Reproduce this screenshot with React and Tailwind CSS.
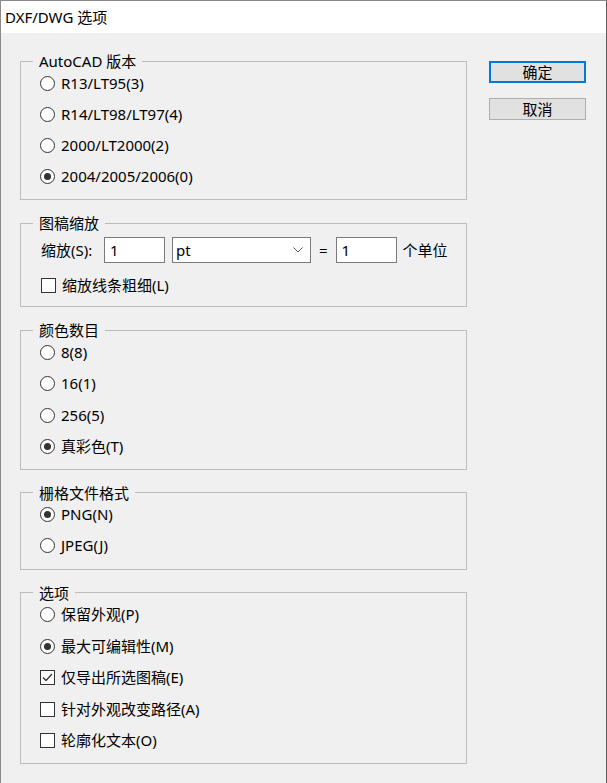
import React from "react";

function Radio({ label, checked }) {
  return (
    <div className="flex items-center h-6 gap-[6px]">
      <span className="w-[15px] h-[15px] rounded-full border border-[#333333] bg-white flex items-center justify-center">
        {checked && <span className="w-[7px] h-[7px] rounded-full bg-[#333333]" />}
      </span>
      <span>{label}</span>
    </div>
  );
}

function Check({ label, checked }) {
  return (
    <div className="flex items-center h-6 gap-[6px]">
      <span className="w-[15px] h-[15px] border border-[#333333] bg-white flex items-center justify-center">
        {checked && (
          <svg width="11" height="9" viewBox="0 0 11 9">
            <path d="M1 4.5 L4 7.5 L10 1" fill="none" stroke="#333333" strokeWidth="1.3" />
          </svg>
        )}
      </span>
      <span>{label}</span>
    </div>
  );
}

function Group({ title, children }) {
  return (
    <fieldset className="border border-[#bcbcbc] px-0 m-0">
      <legend className="ml-[12px] px-[6px] leading-[20px]">{title}</legend>
      {children}
    </fieldset>
  );
}

export default function App() {
  return (
    <div className="w-[607px] h-[783px] bg-[#f0f0f0] border-t border-l border-r border-t-[#8a8a8a] border-l-[#8a8a8a] border-r-[#5a5e63] flex flex-col text-[15px] text-black font-['Noto_Sans','Noto_Sans_CJK_SC',sans-serif] overflow-hidden">
      <div className="h-[32px] shrink-0 bg-white flex items-center pl-[4px]">DXF/DWG 选项</div>
      <div className="flex pt-[18px] pl-[19px]">
        <div className="w-[447px] flex flex-col gap-[13px]">
          <Group title="AutoCAD 版本">
            <div className="flex flex-col gap-[7px] pl-[19px] pt-0 pb-[11px]">
              <Radio label="R13/LT95(3)" />
              <Radio label="R14/LT98/LT97(4)" />
              <Radio label="2000/LT2000(2)" />
              <Radio label="2004/2005/2006(0)" checked />
            </div>
          </Group>
          <Group title="图稿缩放">
            <div className="flex flex-col pl-[20px] pt-[4px] pb-[9px] gap-[10px]">
              <div className="flex items-center h-[26px]">
                <span className="w-[63px]">缩放(S):</span>
                <div className="w-[61px] h-[26px] border border-[#7a7a7a] bg-white pl-[5px] flex items-center">1</div>
                <div className="ml-[7px] w-[139px] h-[26px] border border-[#7a7a7a] bg-white flex items-center">
                  <span className="flex-1 pl-[3px]">pt</span>
                  <span className="w-[24px] h-full flex items-center justify-center">
                    <svg width="10" height="6" viewBox="0 0 10 6">
                      <path d="M0.5 0.5 L5 5 L9.5 0.5" fill="none" stroke="#555555" strokeWidth="1" />
                    </svg>
                  </span>
                </div>
                <span className="ml-[8px]">=</span>
                <div className="ml-[8px] w-[61px] h-[26px] border border-[#7a7a7a] bg-white pl-[5px] flex items-center">1</div>
                <span className="ml-[6px]">个单位</span>
              </div>
              <Check label="缩放线条粗细(L)" />
            </div>
          </Group>
          <Group title="颜色数目">
            <div className="flex flex-col gap-[7.5px] pl-[19px] pt-0 pb-[10px]">
              <Radio label="8(8)" />
              <Radio label="16(1)" />
              <Radio label="256(5)" />
              <Radio label="真彩色(T)" checked />
            </div>
          </Group>
          <Group title="栅格文件格式">
            <div className="flex flex-col gap-[7px] pl-[19px] pt-0 pb-[11px]">
              <Radio label="PNG(N)" checked />
              <Radio label="JPEG(J)" />
            </div>
          </Group>
          <Group title="选项">
            <div className="flex flex-col gap-[7.5px] pl-[19px] pt-0 pb-[10px]">
              <Radio label="保留外观(P)" />
              <Radio label="最大可编辑性(M)" checked />
              <Check label="仅导出所选图稿(E)" checked />
              <Check label="针对外观改变路径(A)" />
              <Check label="轮廓化文本(O)" />
            </div>
          </Group>
        </div>
        <div className="ml-[22px] w-[97px] flex flex-col gap-[15px] mt-[10px]">
          <div className="h-[22px] border-2 border-[#0078d7] bg-[#e1e1e1] flex items-center justify-center">确定</div>
          <div className="h-[22px] border border-[#adadad] bg-[#e1e1e1] flex items-center justify-center">取消</div>
        </div>
      </div>
    </div>
  );
}
